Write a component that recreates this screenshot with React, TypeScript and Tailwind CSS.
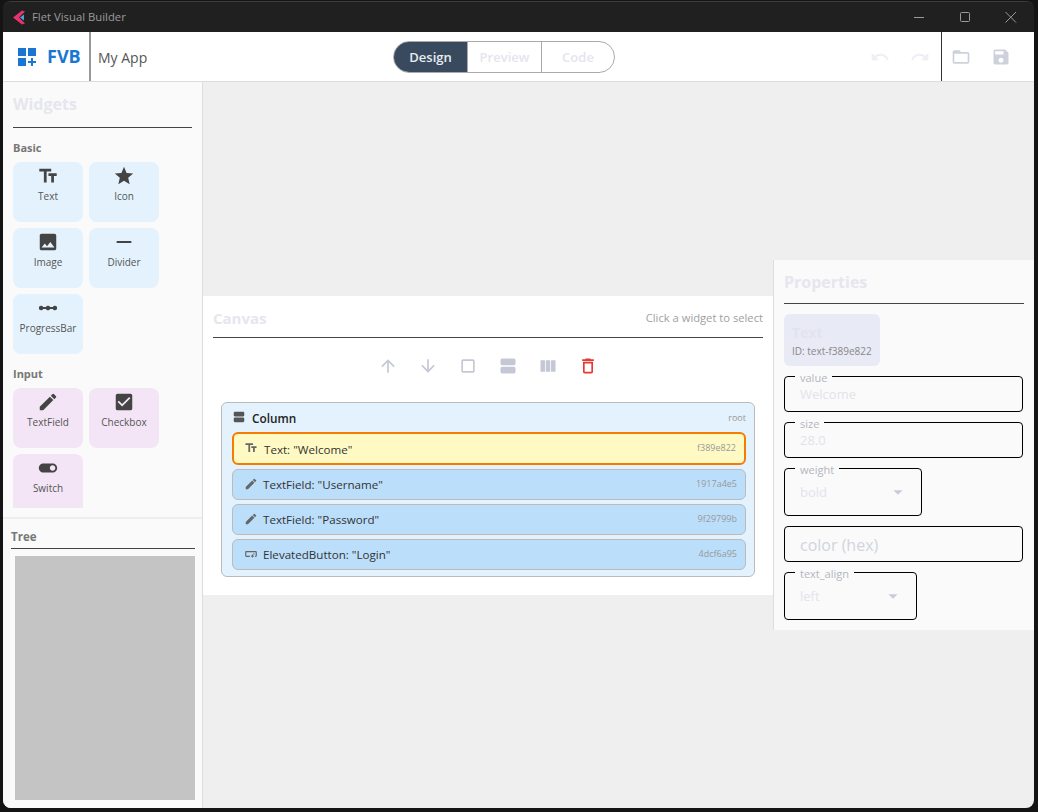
import type { ReactNode } from "react";
import {
  MdTextFields, MdStar, MdImage, MdHorizontalRule, MdLinearScale, MdEdit, MdCheckBox, MdToggleOn,
  MdViewAgenda, MdViewColumn, MdCropSquare, MdDeleteOutline, MdArrowUpward, MdArrowDownward,
  MdSmartButton, MdUndo, MdRedo, MdFolderOpen, MdSave, MdDashboardCustomize, MdArrowDropDown,
} from "react-icons/md";
import type { IconType } from "react-icons";

const basic: [string, IconType][] = [
  ["Text", MdTextFields],
  ["Icon", MdStar],
  ["Image", MdImage],
  ["Divider", MdHorizontalRule],
  ["ProgressBar", MdLinearScale],
];
const input: [string, IconType][] = [
  ["TextField", MdEdit],
  ["Checkbox", MdCheckBox],
  ["Switch", MdToggleOn],
];

const children: [string, string, IconType][] = [
  ['TextField: "Username"', "1917a4e5", MdEdit],
  ['TextField: "Password"', "9f29799b", MdEdit],
  ['ElevatedButton: "Login"', "4dcf6a95", MdSmartButton],
];

const WidgetCard = ({ label, Icon, color }: { label: string; Icon: IconType; color: string }) => (
  <div className={`flex h-[60px] w-[70px] shrink-0 flex-col items-center rounded-[8px] pt-[3px] ${color}`}>
    <Icon className="h-[22px] w-[22px] text-[#444]" />
    <span className="mt-[2px] text-[10px] leading-[14px] text-[#555]">{label}</span>
  </div>
);

const Field = ({ label, value, width, tall, select }: { label?: string; value: string; width: string; tall?: boolean; select?: boolean }) => (
  <div className={`relative flex items-center rounded-[4px] border-[1.5px] border-black pl-[15px] pt-[1px] ${width} ${tall ? "h-[48px]" : "h-[36px]"}`}>
    {label && (
      <span className="absolute left-[10px] top-[-6px] bg-[#fafafa] px-[5px] text-[11px] leading-[14px] text-[#b4b6c0]">{label}</span>
    )}
    <span className={label ? "text-[13px] text-[#e3e3ea]" : "text-[16px] text-[#d2d4de]"}>{value}</span>
    {select && <MdArrowDropDown className="absolute right-[12px] top-[12px] h-[22px] w-[22px] text-[#c9ccd6]" />}
  </div>
);

const Panel = ({ children }: { children: ReactNode }) => <div className="flex flex-col">{children}</div>;

export default function App() {
  return (
    <div className="h-[812px] w-[1038px] overflow-hidden bg-[#141414] pb-[4px] pl-[3px] pr-[4px] pt-[1px] font-['Open_Sans',sans-serif]">
      <div className="flex h-[807px] flex-col overflow-hidden rounded-[8px] border-t border-[#3c3c3c]">
        {/* title bar */}
        <div className="flex h-[30px] shrink-0 items-center bg-[#202020] pl-[10px] text-[#9b9b9b]">
          <svg viewBox="0 0 12 14" className="h-[15px] w-[12px]">
            <path d="M9 0 L0 7 L9 14 L12 13 L6 7 L12 1 Z" fill="#e8316f" />
            <path d="M11 4 L7 7 L11 10 Z" fill="#45a8e0" />
          </svg>
          <span className="ml-[7px] text-[11.3px]">Flet Visual Builder</span>
          <div className="ml-auto flex items-center">
            <WindowControls />
          </div>
        </div>

        {/* header */}
        <div className="flex h-[50px] shrink-0 border-b border-[#dddddd] bg-white">
          <div className="flex w-[86px] items-center pl-[12px]">
            <MdDashboardCustomize className="h-[24px] w-[24px] text-[#1976d2]" />
            <span className="ml-[8px] text-[18px] font-bold text-[#1976d2]">FVB</span>
          </div>
          <div className="w-[2px] bg-[#999]" />
          <div className="flex w-[302px] items-center pl-[7px] pt-[2px] text-[14px] text-[#555]">My App</div>
          <div className="flex items-center">
            <div className="flex h-[32px] w-[222px] overflow-hidden rounded-full border border-[#aaa] text-[13px] font-semibold">
              <div className="flex w-[73px] items-center justify-center bg-[#3a4a5e] pt-[3px] text-[#e8ecf4]">Design</div>
              <div className="flex w-[74px] items-center justify-center border-l border-[#aaa] pt-[3px] text-[#e4e5ee]">Preview</div>
              <div className="flex flex-1 items-center justify-center border-l border-[#aaa] pt-[3px] text-[#e4e5ee]">Code</div>
            </div>
          </div>
          <div className="ml-auto flex items-center gap-[20px] pr-[11px] text-[#eeeff4]">
            <MdUndo className="h-[20px] w-[20px]" />
            <MdRedo className="h-[20px] w-[20px]" />
          </div>
          <div className="w-px bg-[#333]" />
          <div className="flex items-center gap-[20px] pl-[9px] pr-[23px] text-[#cdd1dc]">
            <MdFolderOpen className="h-[20px] w-[20px]" />
            <MdSave className="h-[20px] w-[20px]" />
          </div>
        </div>

        <div className="flex min-h-0 flex-1 bg-[#efefef]">
          {/* left column */}
          <div className="flex w-[200px] shrink-0 flex-col border-r border-[#dddddd] bg-[#fafafa]">
            <div className="mb-[9px] h-[426px] shrink-0 overflow-hidden px-[10px] pt-[9px]">
              <div className="w-[179px] border-b border-[#444] pb-[10px] text-[16px] font-bold leading-[26px] text-[#e6e6ee]">Widgets</div>
              <div className="mt-[12px] text-[11px] font-bold leading-[16px] text-[#777]">Basic</div>
              <div className="mt-[6px] flex w-[160px] flex-wrap gap-[6px]">
                {basic.map(([label, Icon]) => (
                  <WidgetCard key={label} label={label} Icon={Icon} color="bg-[#e3f2fd]" />
                ))}
              </div>
              <div className="mt-[12px] text-[11px] font-bold leading-[16px] text-[#777]">Input</div>
              <div className="mt-[6px] flex w-[160px] flex-wrap gap-[6px]">
                {input.map(([label, Icon]) => (
                  <WidgetCard key={label} label={label} Icon={Icon} color="bg-[#f3e5f5]" />
                ))}
              </div>
            </div>
            <div className="flex min-h-0 flex-1 flex-col border-t-2 border-[#eeeeee] px-[8px] pb-[8px] pt-[9px]">
              <div className="w-[184px] border-b border-[#444] pb-[3px] text-[11.5px] font-bold leading-[17px] text-[#777]">Tree</div>
              <div className="ml-[4px] mt-[7px] w-[180px] flex-1 bg-[#c4c4c4]" />
            </div>
          </div>

          {/* canvas */}
          <div className="flex w-[570px] shrink-0 flex-col justify-center">
            <div className="h-[299px] bg-white px-[10px] pt-[10px]">
              <div className="flex h-[32px] items-center justify-between border-b border-[#444] pb-[6px]">
                <span className="text-[15px] font-bold text-[#e6e6ee]">Canvas</span>
                <span className="text-[11.2px] text-[#a0a0a0]">Click a widget to select</span>
              </div>
              <div className="flex h-[56px] items-center justify-center gap-[20px] text-[#c3c8d4]">
                <MdArrowUpward className="h-[20px] w-[20px]" />
                <MdArrowDownward className="h-[20px] w-[20px]" />
                <MdCropSquare className="h-[20px] w-[20px]" />
                <MdViewAgenda className="h-[20px] w-[20px]" />
                <MdViewColumn className="h-[20px] w-[20px]" />
                <MdDeleteOutline className="h-[20px] w-[20px] text-[#e53935]" />
              </div>
              <div className="mx-[8px] mt-[8px] rounded-[6px] border border-[#bbbbbb] bg-[#e3f2fd] pb-[6px] pl-[10px] pr-[8px]">
                <div className="flex h-[29px] items-center">
                  <MdViewAgenda className="h-[14px] w-[14px] text-[#555]" />
                  <span className="ml-[6px] pt-[3px] text-[11.8px] font-semibold text-[#222]">Column</span>
                  <span className="ml-auto pt-[1px] text-[9px] text-[#999]">root</span>
                </div>
                <div className="flex flex-col gap-[4px]">
                  <div className="flex h-[33px] items-center rounded-[6px] border-2 border-[#f57c00] bg-[#fff9c4] pl-[10px] pr-[8px]">
                    <MdTextFields className="h-[14px] w-[14px] text-[#666]" />
                    <span className="ml-[6px] pt-[3px] text-[11.6px] text-[#333]">Text: "Welcome"</span>
                    <span className="ml-auto text-[9px] text-[#999]">f389e822</span>
                  </div>
                  {children.map(([label, id, Icon]) => (
                    <div key={id} className="flex h-[31px] items-center rounded-[6px] border border-[#bbbbbb] bg-[#bbdefb] pl-[11px] pr-[8px]">
                      <Icon className="h-[14px] w-[14px] text-[#666]" />
                      <span className="ml-[5px] pt-[2px] text-[11.6px] text-[#333]">{label}</span>
                      <span className="ml-auto text-[9px] text-[#999]">{id}</span>
                    </div>
                  ))}
                </div>
              </div>
            </div>
          </div>

          {/* properties */}
          <div className="flex flex-1 flex-col justify-center">
            <div className="h-[370px] border-l border-[#dddddd] bg-[#fafafa] px-[10px] pt-[9px]">
              <div className="h-[35px] border-b border-[#444] text-[16px] font-bold leading-[26px] text-[#e6e6ee]">Properties</div>
              <Panel>
                <div className="mt-[10px] flex h-[52px] w-[96px] flex-col justify-center rounded-[6px] bg-[#e8eaf6] pl-[8px]">
                  <span className="text-[14px] font-bold leading-[19px] text-[#e2e3ec]">Text</span>
                  <span className="mt-[2px] text-[10px] leading-[14px] text-[#888]">ID: text-f389e822</span>
                </div>
                <div className="mt-[10px] flex flex-col gap-[10px]">
                  <Field label="value" value="Welcome" width="w-[239px]" />
                  <Field label="size" value="28.0" width="w-[239px]" />
                  <Field label="weight" value="bold" width="w-[138px]" tall select />
                  <Field value="color (hex)" width="w-[239px]" />
                  <Field label="text_align" value="left" width="w-[133px]" tall select />
                </div>
              </Panel>
            </div>
          </div>
        </div>
      </div>
    </div>
  );
}

function WindowControls() {
  return (
    <svg viewBox="0 0 130 14" className="h-[14px] w-[130px]" fill="none" stroke="#9a9a9a" strokeWidth="1">
      <path d="M10 7.5 H20" />
      <rect x="56.5" y="2.5" width="9" height="9" rx="1" />
      <path d="M101.5 2 L112 12.5 M112 2 L101.5 12.5" />
    </svg>
  );
}
